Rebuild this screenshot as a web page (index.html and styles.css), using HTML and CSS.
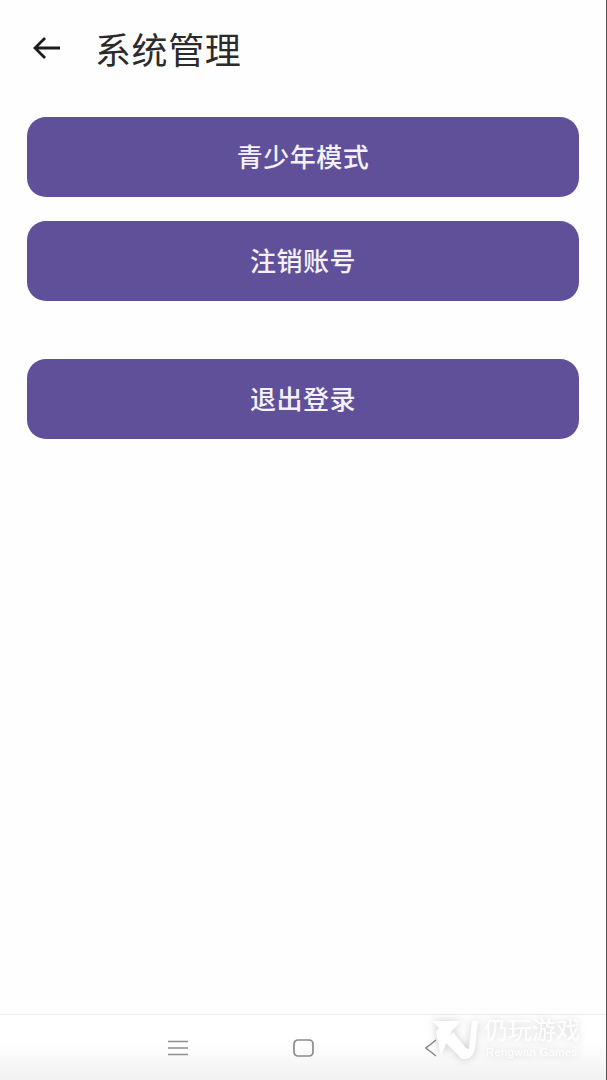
FILE: index.html
```html
<!DOCTYPE html>
<html lang="zh">
<head>
<meta charset="utf-8">
<title>系统管理</title>
<link rel="stylesheet" href="styles.css">
</head>
<body>
<div class="screen">
  <header class="topbar">
    <svg class="back" width="30" height="26" viewBox="0 0 30 26"><path d="M28 13H3M13 3 3 13l10 10" fill="none" stroke="#1c1c1c" stroke-width="2.800"/></svg>
    <h1 class="title">系统管理</h1>
  </header>
  <main class="actions">
    <button class="btn">青少年模式</button>
    <button class="btn">注销账号</button>
    <button class="btn btn-gap">退出登录</button>
  </main>
  <nav class="navbar">
    <svg class="nav-menu" width="20" height="16" viewBox="0 0 20 16"><path d="M0 1.500H20M0 8H20M0 14.500H20" stroke="#8f8f8f" stroke-width="1.500"/></svg>
    <svg class="nav-home" width="21" height="18" viewBox="0 0 21 18"><rect x="1" y="1" width="19" height="16" rx="4" fill="none" stroke="#8a8a8a" stroke-width="1.700"/></svg>
    <svg class="nav-back" width="14" height="18" viewBox="0 0 14 18"><path d="M12 1 2 9l10 8" fill="none" stroke="#8a8a8a" stroke-width="1.600"/></svg>
  </nav>
  <div class="watermark">
    <svg class="wm-logo" width="48" height="44" viewBox="0 0 48 44"><path d="M1 3H30L21 13 10 37 5 14 8 10ZM14 24 22 14 35 30C37 32 38 31 38 29L41 3 47 2 44 30C43 38 38 41 33 41 30 41 29 40 28 38Z" fill="#fff"/></svg>
    <div class="wm-text">
      <div class="wm-cn">仍玩游戏</div>
      <div class="wm-en">Rengwan Games</div>
    </div>
  </div>
</div>
</body>
</html>
```
FILE: styles.css
```css
* { box-sizing: border-box; }
html, body { margin: 0; padding: 0; }
body { background: #fff; font-family: "Noto Sans CJK SC", "Liberation Sans", sans-serif; }
.screen {
  position: relative;
  width: 607px;
  height: 1080px;
  display: flex;
  flex-direction: column;
  background: #fffefe;
  border-right: 1px solid #555;
  overflow: hidden;
}
.topbar {
  height: 100px;
  flex: none;
  display: flex;
  align-items: center;
  padding: 0 0 4px 32px;
  gap: 33px;
}
.title {
  margin: 0;
  font-size: 36px;
  font-weight: 400;
  letter-spacing: .6px;
  color: #2b2b2b;
  line-height: 1;
}
.actions {
  flex: 1;
  display: flex;
  flex-direction: column;
  gap: 24px;
  padding: 17px 27px 0;
}
.btn {
  height: 80px;
  width: 552px;
  flex: none;
  border: 0;
  border-radius: 19px;
  background: #5f5099;
  color: #f4f2f8;
  font-family: inherit;
  font-size: 26px;
  font-weight: 500;
  letter-spacing: .5px;
  padding: 0 0 2px;
  line-height: 1;
}
.btn-gap { margin-top: 34px; }
.navbar {
  height: 66px;
  flex: none;
  border-top: 1px solid #efefef;
  background: linear-gradient(#fff 40%, #f1f1f1);
  display: flex;
  align-items: center;
  padding: 0 0 0 168px;
}
.nav-menu { margin-top: 1px; }
.nav-home { margin-left: 105px; margin-top: 1px; }
.nav-back { margin-left: 110px; }
.watermark {
  position: absolute;
  left: 431px;
  top: 1018px;
  display: flex;
  align-items: flex-start;
  gap: 5px;
  filter: drop-shadow(0 0 4px rgba(0,0,0,.2));
}
.wm-text { color: #fff; line-height: 1; }
.wm-cn { font-size: 24px; font-weight: 400; margin-top: -1px; }
.wm-en { font-family: "Liberation Sans", sans-serif; font-size: 11.500px; margin-top: 6px; padding-left: 2px; letter-spacing: .2px; }
```
